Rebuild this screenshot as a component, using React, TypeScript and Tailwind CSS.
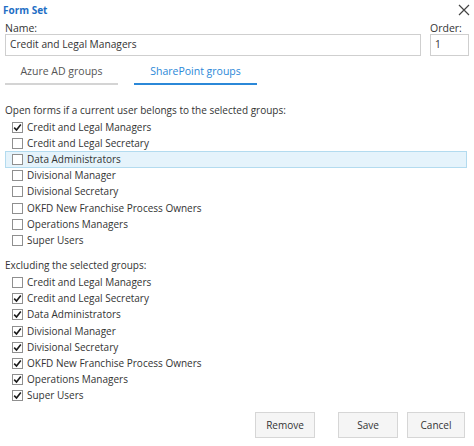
import { useState } from 'react'

const groups = [
  'Credit and Legal Managers',
  'Credit and Legal Secretary',
  'Data Administrators',
  'Divisional Manager',
  'Divisional Secretary',
  'OKFD New Franchise Process Owners',
  'Operations Managers',
  'Super Users',
]

function Check({ checked }: { checked: boolean }) {
  return (
    <span className="flex h-[11px] w-[11px] shrink-0 items-center justify-center border border-[#8f8f8f] bg-white">
      {checked && (
        <svg width="9" height="9" viewBox="0 0 9 9">
          <path d="M1.2 4.6 L3.5 7 L7.8 1.4" fill="none" stroke="#1a1a1a" strokeWidth="1.6" />
        </svg>
      )}
    </span>
  )
}

function GroupList(props: { checked: boolean[]; hover?: number }) {
  return (
    <div className="flex flex-col">
      {groups.map((g, i) => (
        <div
          key={g}
          className={
            'flex h-[16.2px] items-center gap-[4px] pl-[6px] ' +
            (props.hover === i ? 'mr-[2px] border border-[#b3dbef] bg-[#e5f3fb] pl-[5px]' : 'border border-transparent')
          }
        >
          <Check checked={props.checked[i]} />
          <span className="whitespace-nowrap">{g}</span>
        </div>
      ))}
    </div>
  )
}

export default function App() {
  const [tab, setTab] = useState(1)
  const include = [true, false, false, false, false, false, false, false]
  const exclude = [false, true, true, true, true, true, true, true]

  return (
    <div
      className="h-[446px] w-[474px] bg-white px-[5px] text-[10px] text-[#333]"
      style={{ fontFamily: '"Open Sans", "Noto Sans", sans-serif' }}
    >
      <div className="flex h-[20px] items-center justify-between">
        <span className="-ml-[2px] text-[10px] font-bold text-[#1f6fc5]">Form Set</span>
        <svg width="12" height="12" viewBox="0 0 12 12" className="mr-[-1px]">
          <path d="M1 1 L11 11 M11 1 L1 11" stroke="#444" strokeWidth="1.2" />
        </svg>
      </div>

      <div className="mt-[2px] flex gap-[9px]">
        <div className="flex flex-1 flex-col">
          <span className="h-[12px] leading-[12px] text-[10.5px]">Name:</span>
          <div className="flex h-[22px] items-center border border-[#cfcfcf] px-[4px] text-[10.2px]">
            Credit and Legal Managers
          </div>
        </div>
        <div className="flex w-[39px] flex-col">
          <span className="h-[12px] leading-[12px] text-[10.5px]">Order:</span>
          <div className="flex h-[22px] items-center border border-[#cfcfcf] px-[4px] text-[10.2px]">1</div>
        </div>
      </div>

      <div className="mt-[5px] flex h-[24px] gap-[16px]">
        <button
          onClick={() => setTab(0)}
          className={
            'w-[113px] border-b-2 text-center text-[10.5px] ' +
            (tab === 0 ? 'border-[#2b88d8] text-[#2b88d8]' : 'border-[#d4d4d4] text-[#555]')
          }
        >
          Azure AD groups
        </button>
        <button
          onClick={() => setTab(1)}
          className={
            'w-[123px] border-b-2 text-center text-[10.5px] ' +
            (tab === 1 ? 'border-[#2b88d8] text-[#2b88d8]' : 'border-[#d4d4d4] text-[#555]')
          }
        >
          SharePoint groups
        </button>
      </div>

      <div className="mt-[18px] leading-[14px]">Open forms if a current user belongs to the selected groups:</div>
      <div className="mt-[2px]">
        <GroupList checked={include} hover={2} />
      </div>

      <div className="mt-[9px] leading-[14px]">Excluding the selected groups:</div>
      <div className="mt-[3px]">
        <GroupList checked={exclude} />
      </div>

      <div className="mt-[8px] flex justify-end gap-[23px] pr-[4px]">
        <button className="h-[26px] w-[60px] border border-[#d6d6d6] bg-[#f5f5f5]">Remove</button>
        <div className="flex gap-[9px]">
          <button className="h-[26px] w-[60px] border border-[#d6d6d6] bg-[#f5f5f5]">Save</button>
          <button className="h-[26px] w-[58px] border border-[#d6d6d6] bg-[#f5f5f5]">Cancel</button>
        </div>
      </div>
    </div>
  )
}
